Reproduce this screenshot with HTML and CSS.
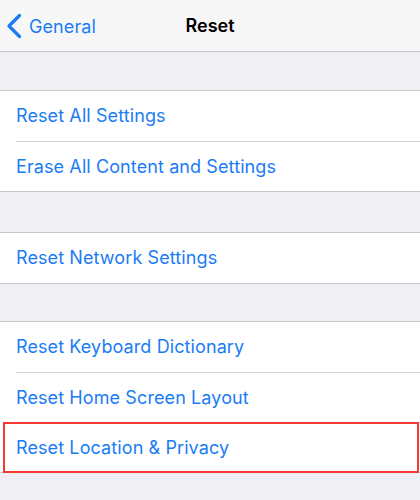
FILE: index.html
```html
<!DOCTYPE html>
<html>
<head>
<meta charset="utf-8">
<link rel="stylesheet" href="styles.css">
</head>
<body>
<div class="screen">
  <header class="navbar">
    <div class="back">
      <svg class="chev" width="16" height="26" viewBox="0 0 16 26"><path d="M13.5 2.5 L3 13 L13.5 23.5" fill="none" stroke="#1a7cf5" stroke-width="3.2" stroke-linecap="round" stroke-linejoin="round"/></svg>
      <span class="back-label">General</span>
    </div>
    <div class="title">Reset</div>
  </header>
  <div class="gap gap-top"></div>
  <section class="group">
    <div class="row">Reset All Settings</div>
    <div class="row">Erase All Content and Settings</div>
  </section>
  <div class="gap gap-wide"></div>
  <section class="group">
    <div class="row">Reset Network Settings</div>
  </section>
  <div class="gap gap-narrow"></div>
  <section class="group">
    <div class="row">Reset Keyboard Dictionary</div>
    <div class="row">Reset Home Screen Layout</div>
    <div class="row highlight">Reset Location &amp; Privacy</div>
  </section>
</div>
</body>
</html>
```
FILE: styles.css
```css
html, body { margin: 0; padding: 0; }
body {
  width: 420px;
  height: 500px;
  overflow: hidden;
  background: #efeff4;
  font-family: "Inter", "Liberation Sans", Arial, sans-serif;
  -webkit-font-smoothing: antialiased;
}
.screen { display: flex; flex-direction: column; }
.navbar {
  height: 51px;
  background: #f7f7f8;
  border-bottom: 1px solid #c8c7cc;
  position: relative;
  display: flex;
  align-items: center;
}
.back {
  display: flex;
  align-items: center;
  padding-left: 6px;
  color: #1a7cf5;
  font-size: 18px;
  letter-spacing: 0.1px;
  margin-top: 1px;
}
.chev { margin-right: 7px; }
.title {
  position: absolute;
  left: 0; right: 0; top: 0; bottom: 0;
  display: flex; align-items: center; justify-content: center;
  font-size: 18px;
  font-weight: 600;
  color: #000;
  pointer-events: none;
}
.gap-top { height: 38px; }
.gap-wide { height: 40px; }
.gap-narrow { height: 37px; }
.group {
  background: #fff;
  border-top: 1px solid #c8c7cc;
  border-bottom: 1px solid #c8c7cc;
}
.row {
  box-sizing: border-box;
  height: 50px;
  display: flex;
  align-items: center;
  padding-left: 16px;
  padding-bottom: 1px;
  color: #1a7cf5;
  font-size: 18px;
  letter-spacing: 0.1px;
  position: relative;
}
.row + .row { border-top: 1px solid transparent; }
.row + .row::before {
  content: "";
  position: absolute;
  left: 16px; right: 0; top: -1px;
  height: 1px;
  background: #d4d3d8;
}
.highlight::after {
  content: "";
  position: absolute;
  left: 3px; right: 1px; top: -1px; bottom: -1px;
  border: 2px solid #f53a31;
  pointer-events: none;
}
```
